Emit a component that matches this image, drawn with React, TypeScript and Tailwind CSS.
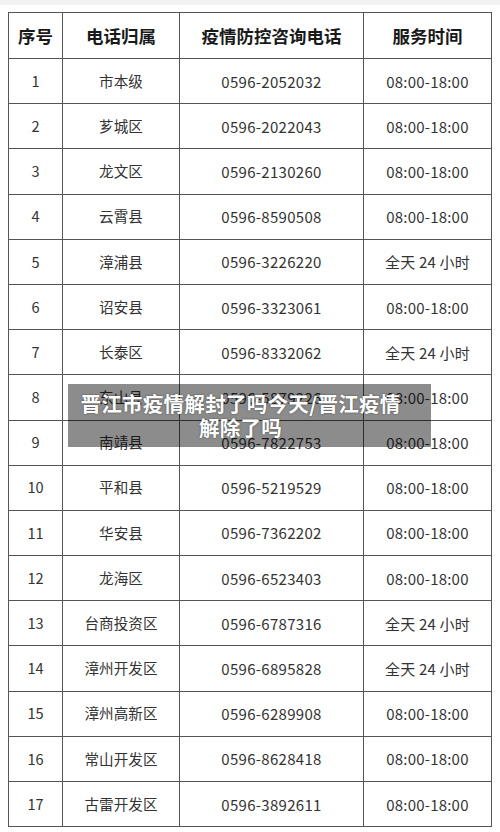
import React from "react";

const rows = [
  ["1", "市本级", "0596-2052032", "08:00-18:00"],
  ["2", "芗城区", "0596-2022043", "08:00-18:00"],
  ["3", "龙文区", "0596-2130260", "08:00-18:00"],
  ["4", "云霄县", "0596-8590508", "08:00-18:00"],
  ["5", "漳浦县", "0596-3226220", "全天 24 小时"],
  ["6", "诏安县", "0596-3323061", "08:00-18:00"],
  ["7", "长泰区", "0596-8332062", "全天 24 小时"],
  ["8", "东山县", "0596-5879226", "08:00-18:00"],
  ["9", "南靖县", "0596-7822753", "08:00-18:00"],
  ["10", "平和县", "0596-5219529", "08:00-18:00"],
  ["11", "华安县", "0596-7362202", "08:00-18:00"],
  ["12", "龙海区", "0596-6523403", "08:00-18:00"],
  ["13", "台商投资区", "0596-6787316", "全天 24 小时"],
  ["14", "漳州开发区", "0596-6895828", "全天 24 小时"],
  ["15", "漳州高新区", "0596-6289908", "08:00-18:00"],
  ["16", "常山开发区", "0596-8628418", "08:00-18:00"],
  ["17", "古雷开发区", "0596-3892611", "08:00-18:00"],
];

const font = { fontFamily: '"Noto Sans CJK SC", "Open Sans", sans-serif' };

export default function App() {
  return (
    <div className="relative w-[500px] h-[832px] bg-white overflow-hidden" style={font}>
      <div className="h-[5px] bg-[#f2f2f2]" />
      <div className="pt-[7px] pl-[8px]">
        <table className="border-collapse w-[483px] table-fixed text-[#333]">
          <colgroup>
            <col className="w-[54px]" />
            <col className="w-[117px]" />
            <col className="w-[184px]" />
            <col className="w-[128px]" />
          </colgroup>
          <thead>
            <tr className="h-[46px]">
              {["序号", "电话归属", "疫情防控咨询电话", "服务时间"].map((h) => (
                <th
                  key={h}
                  className="border border-[#555] text-center text-[17.5px] font-bold text-[#1a1a1a] p-0 leading-none"
                >
                  {h}
                </th>
              ))}
            </tr>
          </thead>
          <tbody>
            {rows.map((r) => (
              <tr key={r[0]} className="h-[45.2px]">
                {r.map((c, i) => (
                  <td
                    key={i}
                    className={`border border-[#555] text-center p-0 leading-none ${
                      i === 2 ? "text-[15px] tracking-[0.3px]" : i === 3 ? "text-[15px] tracking-[0.2px]" : "text-[14.6px]"
                    }`}
                  >
                    {c}
                  </td>
                ))}
              </tr>
            ))}
          </tbody>
        </table>
      </div>

      {/* title overlay */}
      <div className="absolute left-[68px] top-[384px] w-[363px] h-[63px] bg-black/45 flex flex-col items-center justify-center pb-[2px] pr-[18px]">
        <p className="text-white font-bold text-[20.5px] tracking-[0.3px] leading-[24px] text-center [text-shadow:0_0_2px_rgba(0,0,0,0.5)]">
          晋江市疫情解封了吗今天/晋江疫情
          <br />
          解除了吗
        </p>
      </div>
    </div>
  );
}
